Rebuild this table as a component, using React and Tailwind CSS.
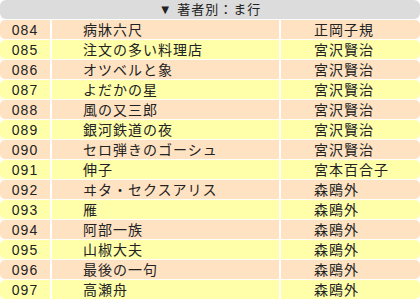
import React from "react";

const rows = [
  ["084", "病牀六尺", "正岡子規"],
  ["085", "注文の多い料理店", "宮沢賢治"],
  ["086", "オツベルと象", "宮沢賢治"],
  ["087", "よだかの星", "宮沢賢治"],
  ["088", "風の又三郎", "宮沢賢治"],
  ["089", "銀河鉄道の夜", "宮沢賢治"],
  ["090", "セロ弾きのゴーシュ", "宮沢賢治"],
  ["091", "伸子", "宮本百合子"],
  ["092", "ヰタ・セクスアリス", "森鴎外"],
  ["093", "雁", "森鴎外"],
  ["094", "阿部一族", "森鴎外"],
  ["095", "山椒大夫", "森鴎外"],
  ["096", "最後の一句", "森鴎外"],
  ["097", "高瀬舟", "森鴎外"],
];

export default function App() {
  return (
    <div
      className="w-[420px] h-[300px] overflow-hidden bg-white flex flex-col gap-[1px] text-[#222]"
      style={{ fontFamily: '"Liberation Sans", "Noto Sans CJK JP", sans-serif' }}
    >
      <div className="h-[19px] shrink-0 bg-[#dcdcdc] rounded-[6px] flex items-center justify-center text-[13px] leading-[19px] tracking-[1px]">
        ▼ 著者別：ま行
      </div>
      {rows.map(([n, title, author], i) => {
        const bg = i % 2 === 0 ? "bg-[#ffe2c2]" : "bg-[#ffffaa]";
        return (
          <div key={n} className="h-[19px] shrink-0 flex gap-[2px] text-[14px] leading-[16px] tracking-[1px]">
            <div className={`w-[50px] shrink-0 ${bg} rounded-l-[5px] text-center pt-[2px]`}>{n}</div>
            <div className={`w-[227px] shrink-0 ${bg} pl-[31px] pt-[2px] whitespace-nowrap`}>{title}</div>
            <div className={`flex-1 ${bg} rounded-r-[5px] pl-[33px] pt-[2px] whitespace-nowrap`}>{author}</div>
          </div>
        );
      })}
    </div>
  );
}
